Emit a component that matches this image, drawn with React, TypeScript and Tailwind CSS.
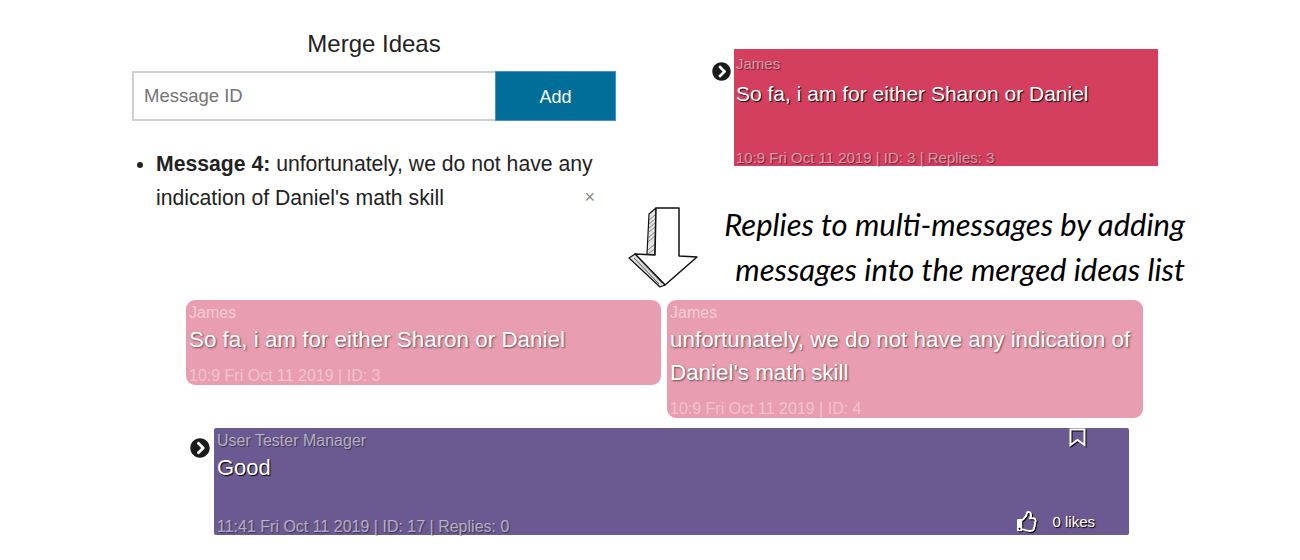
import React from "react";
import { FaChevronCircleRight, FaRegThumbsUp } from "react-icons/fa";

const bright = "[text-shadow:1px_1px_1px_#000]";
const dim = "[text-shadow:1px_1px_2px_rgba(0,0,0,0.55)]";
const faint = "[text-shadow:1px_1px_1px_rgba(0,0,0,0.45)]";

function HandArrow() {
  return (
    <svg width="70" height="81" viewBox="0 0 70 81" fill="none" stroke="#111" strokeLinejoin="round" className="mt-[1px] shrink-0 overflow-visible">
      <path d="M27 0 L20 6 L18 46 L26 47 Z" fill="#e4e4e4" strokeWidth="1.2" />
      <path d="M20 12 L26 7 M20 16 L26 11 M20 20 L26 15 M20 24 L26 19 M19 30 L26 24 M19 34 L26 28 M19 42 L26 36 M20 45 L26 41" stroke="#666" strokeWidth="0.8" />
      <path d="M27 0 L50 0 L50 48 L68 49 L36 77 L6 46 L26 47 Z" fill="#fff" strokeWidth="1.5" />
      <path d="M6 46 L0 50 L31 79 L36 77 Z" fill="#ddd" strokeWidth="1.2" />
      <path d="M5 50 L30 76 M11 52 L33 75" stroke="#555" strokeWidth="1" />
    </svg>
  );
}

function BookmarkIcon() {
  return (
    <svg width="17" height="19" viewBox="0 0 17 19" fill="none" stroke="#fff" strokeWidth="2" className="mr-[9px] -mt-[4px] drop-shadow-[1px_1px_0_#000]">
      <path d="M1.5 1.5 H15.5 V17 L8.5 12 L1.5 17 Z" />
    </svg>
  );
}

function MergedCard({ text, meta, height }: { text: React.ReactNode; meta: string; height: string }) {
  return (
    <div className={`flex flex-col rounded-[9px] bg-[#e99db0] pl-[3px] text-white ${height}`}>
      <div className="mt-[4px] text-[16px] leading-[17px] text-white/50">James</div>
      <div className={`mt-[2px] text-[22.4px] leading-[33px] ${dim}`}>{text}</div>
      <div className="mt-auto mb-[1px] text-[16px] leading-[17px] text-white/40">{meta}</div>
    </div>
  );
}

export default function App() {
  return (
    <div className="h-[560px] w-[1300px] overflow-hidden bg-white font-['Liberation_Sans',Arial,sans-serif] text-[#222]">
      <div className="flex pl-[132px] pt-[29px]">
        <div className="w-[484px] shrink-0">
          <h2 className="text-center text-[24px] leading-[29px]">Merge Ideas</h2>
          <div className="mt-[13px] flex h-[50px]">
            <div className="flex flex-1 items-center border-2 border-r-0 border-[#cfcfcf] pl-[10px] text-[18.5px] text-[#757575]">Message ID</div>
            <button className="w-[121px] border border-[#4a90d9] bg-[#006e99] pt-[3px] text-[18px] text-white">Add</button>
          </div>
          <ul className="mt-[26px] list-disc pl-[24px] text-[21.2px] leading-[34px]">
            <li className="relative">
              <b>Message 4:</b> unfortunately, we do not have any indication of Daniel's math skill
              <span className="absolute right-[21px] bottom-[3px] text-[18px] leading-[30px] text-[#888]">×</span>
            </li>
          </ul>
        </div>
        <div className="ml-[13px] flex-1">
          <div className="ml-[83px] mt-[20px] flex w-[446px]">
            <FaChevronCircleRight className="mt-[13px] mr-[3px] shrink-0 text-[#1a1a1a]" size={19} />
            <div className="flex h-[117px] flex-1 flex-col bg-[#d43f60] pl-[2px] text-white">
              <div className={`mt-[6px] text-[15px] leading-[17px] text-white/50 ${faint}`}>James</div>
              <div className={`mt-[5px] text-[21px] leading-[33px] ${bright}`}>So fa, i am for either Sharon or Daniel</div>
              <div className={`mt-auto text-[15px] leading-[17px] text-white/50 ${faint}`}>10:9 Fri Oct 11 2019 | ID: 3 | Replies: 3</div>
            </div>
          </div>
          <div className="mt-[41px] flex items-start">
            <HandArrow />
            <div className="-mt-[5px] ml-[23px] w-[463px] text-right font-['Lato',sans-serif] text-[31px] italic leading-[45px] text-black">
              Replies to multi-messages by adding<br />messages into the merged ideas list
            </div>
          </div>
        </div>
      </div>

      <div className="mt-[8px] flex items-start gap-[6px] pl-[186px]">
        <div className="w-[475px]">
          <MergedCard text="So fa, i am for either Sharon or Daniel" meta="10:9 Fri Oct 11 2019 | ID: 3" height="h-[85px]" />
        </div>
        <div className="w-[476px]">
          <MergedCard text="unfortunately, we do not have any indication of Daniel's math skill" meta="10:9 Fri Oct 11 2019 | ID: 4" height="h-[118px]" />
        </div>
      </div>

      <div className="mt-[10px] ml-[190px] flex w-[939px]">
        <FaChevronCircleRight className="mt-[10px] mr-[4px] shrink-0 text-[#1a1a1a]" size={20} />
        <div className="flex h-[107px] flex-1 flex-col rounded-[2px] bg-[#6a5a91] pl-[3px] pr-[34px] text-white">
          <div className="mt-[4px] flex items-start justify-between">
            <span className={`text-[16px] leading-[17px] text-white/55 ${faint}`}>User Tester Manager</span>
            <BookmarkIcon />
          </div>
          <div className={`mt-[2px] text-[22px] leading-[33px] ${bright}`}>Good</div>
          <div className="mt-auto flex items-end justify-between">
            <span className={`text-[16px] leading-[17px] text-white/55 ${faint}`}>11:41 Fri Oct 11 2019 | ID: 17 | Replies: 0</span>
            <span className="mb-[3px] flex items-center gap-[14px] text-[15px] leading-[17px] [text-shadow:1px_1px_1px_#000]">
              <FaRegThumbsUp className="drop-shadow-[1px_1px_0_#000]" size={21} />
              0 likes
            </span>
          </div>
        </div>
      </div>
    </div>
  );
}
